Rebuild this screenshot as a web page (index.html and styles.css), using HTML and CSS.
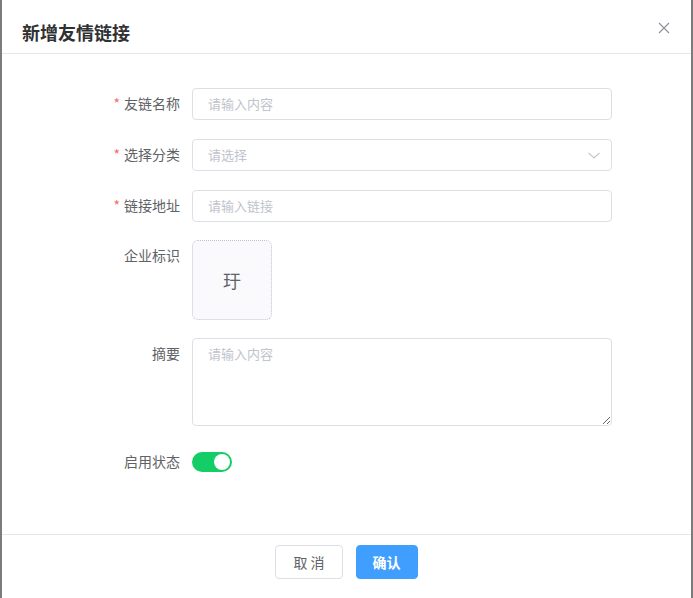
FILE: index.html
```html
<!DOCTYPE html>
<html lang="zh-CN">
<head>
<meta charset="utf-8">
<title>新增友情链接</title>
<link rel="stylesheet" href="styles.css">
</head>
<body>
<div class="dialog">
  <div class="dialog-header">
    <span class="dialog-title">新增友情链接</span>
    <button class="dialog-close" aria-label="关闭">
      <svg width="12" height="12" viewBox="0 0 12 12"><path d="M1 1L11 11M11 1L1 11" stroke="#909399" stroke-width="1.2" fill="none"/></svg>
    </button>
  </div>
  <div class="dialog-body">
    <div class="form-item gap19">
      <label class="form-label"><span class="req">*</span>友链名称</label>
      <div class="form-control"><input class="input" placeholder="请输入内容"></div>
    </div>
    <div class="form-item gap19">
      <label class="form-label"><span class="req">*</span>选择分类</label>
      <div class="form-control select">
        <input class="input" placeholder="请选择" readonly>
        <svg class="chevron" width="12" height="7" viewBox="0 0 12 7"><path d="M0.5 0.8L6 6L11.5 0.8" stroke="#c0c4cc" stroke-width="1.1" fill="none"/></svg>
      </div>
    </div>
    <div class="form-item">
      <label class="form-label"><span class="req">*</span>链接地址</label>
      <div class="form-control"><input class="input" placeholder="请输入链接"></div>
    </div>
    <div class="form-item">
      <label class="form-label">企业标识</label>
      <div class="form-control"><div class="upload">玗</div></div>
    </div>
    <div class="form-item gap20">
      <label class="form-label">摘要</label>
      <div class="form-control"><textarea class="textarea" placeholder="请输入内容"></textarea></div>
    </div>
    <div class="form-item">
      <label class="form-label">启用状态</label>
      <div class="form-control"><span class="switch"><span class="knob"></span></span></div>
    </div>
  </div>
  <div class="dialog-footer">
    <button class="btn btn-default">取 消</button>
    <button class="btn btn-primary">确认</button>
  </div>
</div>
</body>
</html>
```
FILE: styles.css
```css
html, body {
  margin: 0;
  padding: 0;
  height: 100%;
}
body {
  background: #7c7c7c;
  font-family: "Microsoft YaHei", "Noto Sans CJK SC", "Noto Sans", sans-serif;
  overflow: hidden;
}
.dialog {
  margin: 0 2px 0 2px;
  background: #fff;
  height: 100%;
  position: relative;
}
.dialog-header {
  padding: 20px 20px 9px 20px;
  border-bottom: 1px solid #e4e7ed;
  height: 24px;
}
.dialog-title {
  font-size: 18px;
  line-height: 24px;
  font-weight: bold;
  color: #303133;
}
.dialog-close {
  position: absolute;
  top: 22px;
  right: 21px;
  width: 12px;
  height: 12px;
  padding: 0;
  border: 0;
  background: none;
  display: block;
}
.dialog-close svg { display: block; }
.dialog-body {
  padding: 34px 20px 56px 20px;
}
.form-item {
  display: grid;
  grid-template-columns: 170px 420px;
  margin-bottom: 18px;
}
.form-item.gap19 { margin-bottom: 19px; }
.form-item.gap20 { margin-bottom: 20px; }
.form-item:last-child { margin-bottom: 0; }
.form-label {
  text-align: right;
  padding-right: 12px;
  font-size: 14px;
  line-height: 31px;
  color: #606266;
}
.req {
  color: #f56c6c;
  margin-right: 4px;
}
.form-control {
  position: relative;
  display: flex;
  align-items: center;
  min-height: 32px;
}
.input {
  box-sizing: border-box;
  width: 420px;
  height: 32px;
  border: 1px solid #dcdfe6;
  border-radius: 4px;
  padding: 0 15px 1px;
  font-size: 13px;
  font-family: inherit;
  color: #606266;
  outline: none;
  background: #fff;
}
.input::placeholder, .textarea::placeholder { color: #c0c4cc; }
.chevron {
  position: absolute;
  right: 12px;
  top: 13px;
}
.upload {
  box-sizing: border-box;
  width: 80px;
  height: 80px;
  border: 1px dotted #c0c4cc;
  border-radius: 6px;
  background: #fafafc;
  display: flex;
  align-items: center;
  justify-content: center;
  font-size: 18px;
  color: #606266;
}
.textarea {
  box-sizing: border-box;
  width: 420px;
  height: 88px;
  border: 1px solid #dcdfe6;
  border-radius: 4px;
  padding: 5px 15px;
  font-size: 13px;
  line-height: 19px;
  font-family: inherit;
  color: #606266;
  outline: none;
  display: block;
  resize: vertical;
}
.switch {
  width: 40px;
  height: 20px;
  border-radius: 10px;
  background: #13ce66;
  position: relative;
  display: inline-block;
}
.knob {
  position: absolute;
  top: 2px;
  right: 2px;
  width: 16px;
  height: 16px;
  border-radius: 50%;
  background: #fff;
}
.dialog-footer {
  border-top: 1px solid #e4e7ed;
  padding: 10px 20px 20px;
  display: flex;
  justify-content: center;
  gap: 13px;
}
.btn {
  height: 34px;
  padding: 0 16px 1px;
  border-radius: 4px;
  font-size: 14px;
  font-family: inherit;
  border: 1px solid #dcdfe6;
  cursor: pointer;
}
.btn-default {
  background: #fff;
  color: #606266;
  padding: 0 17px 1px;
}
.btn-primary {
  background: #409eff;
  border-color: #409eff;
  color: #fff;
  font-weight: bold;
}
```
